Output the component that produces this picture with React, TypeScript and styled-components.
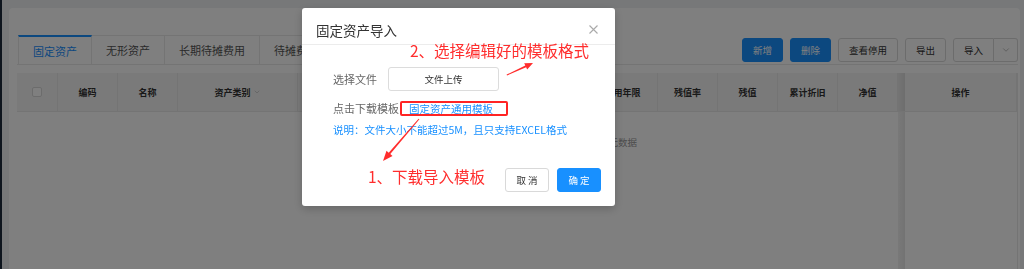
import styled, { createGlobalStyle } from "styled-components";
import { ChevronDown } from "lucide-react";

const GlobalStyle = createGlobalStyle`
  * { box-sizing: border-box; }
  html, body { margin: 0; padding: 0; }
  body {
    width: 1024px;
    height: 269px;
    overflow: hidden;
    font-family: "Noto Sans CJK SC", "Noto Sans", sans-serif;
    background: #eef0f2;
  }
`;

const Page = styled.div`
  display: flex;
  width: 1024px;
  height: 269px;
  background: #eef0f2;
`;
const Sider = styled.div`
  width: 2px;
  background: #1c2a3c;
`;
const Main = styled.div`
  flex: 1;
  display: flex;
  padding: 8px 4px 0 7px;
`;
const Card = styled.div`
  flex: 1;
  display: flex;
  flex-direction: column;
  gap: 8px;
  background: #fff;
  border-radius: 4px 4px 0 0;
  padding: 27px 2px 0 8px;
`;

const TabBar = styled.div`
  display: flex;
  justify-content: space-between;
  align-items: flex-start;
  height: 30px;
  border-bottom: 1px solid #e8e8e8;
`;
const Tabs = styled.div`
  display: flex;
  margin-left: 1px;
`;
const Tab = styled.div<{ $active?: boolean }>`
  height: 29px;
  padding: 0 14px;
  display: flex;
  align-items: center;
  font-size: 11px;
  color: ${(p) => (p.$active ? "#1890ff" : "#555")};
  border: 1px solid #e8e8e8;
  border-left: none;
  border-bottom: none;
  border-top: ${(p) => (p.$active ? "2px solid #1890ff" : "1px solid #e8e8e8")};
  &:first-child {
    border-left: 1px solid #e8e8e8;
  }
`;
const Toolbar = styled.div`
  display: flex;
  gap: 7px;
  padding-top: 3px;
`;
const Btn = styled.div<{ $primary?: boolean }>`
  height: 24px;
  padding: 0 10px;
  display: flex;
  align-items: center;
  justify-content: center;
  font-size: 9.5px;
  border-radius: 3px;
  border: 1px solid ${(p) => (p.$primary ? "#1890ff" : "#d9d9d9")};
  background: ${(p) => (p.$primary ? "#1890ff" : "#fff")};
  color: ${(p) => (p.$primary ? "#fff" : "#333")};
  white-space: pre;
`;
const BtnGroup = styled.div`
  display: flex;
  & > div:first-child {
    border-radius: 3px 0 0 3px;
  }
  & > div:last-child {
    border-radius: 0 3px 3px 0;
    border-left: none;
    padding: 0;
    width: 24px;
    color: #999;
  }
`;

const Table = styled.div`
  flex: 1;
  display: flex;
  flex-direction: column;
  border-right: 1px solid #e8e8e8;
`;
const cols = "41px 60px 60px 120px repeat(5, 58px) 70px repeat(4, 60px) 7px 1fr";
const HeadRow = styled.div`
  display: grid;
  grid-template-columns: ${cols};
  height: 39px;
  background: #f5f5f5;
  border-bottom: 1px solid #e8e8e8;
`;
const HeadCell = styled.div`
  display: flex;
  align-items: center;
  justify-content: center;
  gap: 2px;
  font-size: 9px;
  font-weight: 700;
  color: #333;
  border-right: 1px solid #e8e8e8;
  white-space: nowrap;
`;
const ShadowCell = styled.div`
  background: linear-gradient(to right, rgba(0, 0, 0, 0.05), rgba(0, 0, 0, 0.1));
`;
const CheckBox = styled.span`
  width: 10px;
  height: 10px;
  border: 1px solid #d9d9d9;
  border-radius: 2px;
  background: #fff;
`;
const BodyRow = styled.div`
  flex: 1;
  display: grid;
  grid-template-columns: 881px 7px 1fr;
`;
const ScrollBody = styled.div`
  padding: 15px 0 0 582px;
`;
const EmptyText = styled.span`
  font-size: 9.5px;
  line-height: 14px;
  color: #999;
`;
const FixedBody = styled.div`
  background: #fff;
`;

const Mask = styled.div`
  position: fixed;
  inset: 0;
  background: rgba(0, 0, 0, 0.5);
`;

const Modal = styled.div`
  position: fixed;
  left: 302px;
  top: 8px;
  width: 313px;
  height: 198px;
  display: flex;
  flex-direction: column;
  background: #fff;
  border-radius: 3px;
  box-shadow: 0 3px 10px rgba(0, 0, 0, 0.2);
`;
const ModalHeader = styled.div`
  height: 37px;
  padding: 7px 17px 0 14px;
  display: flex;
  align-items: center;
  justify-content: space-between;
  border-bottom: 1px solid #ececec;
`;
const ModalTitle = styled.div`
  font-size: 13.5px;
  color: #333;
`;
const ModalBody = styled.div`
  display: flex;
  flex-direction: column;
  padding: 22px 0 0 31px;
`;
const FormRow = styled.div<{ $mt?: number }>`
  display: flex;
  align-items: center;
  margin-top: ${(p) => p.$mt ?? 0}px;
`;
const Label = styled.span`
  font-size: 11px;
  color: #666;
  line-height: 15px;
`;
const UploadBtn = styled.div`
  margin-left: 11px;
  width: 111px;
  height: 24px;
  display: flex;
  align-items: center;
  justify-content: center;
  font-size: 9.5px;
  color: #333;
  border: 1px solid #dcdcdc;
  border-radius: 3px;
`;
const LinkBox = styled.span`
  margin-left: 1px;
  padding: 0 13px 0 7px;
  height: 15px;
  display: flex;
  align-items: center;
  border: 2px solid #ff2424;
  border-radius: 2px;
`;
const LinkText = styled.span`
  font-size: 10.5px;
  color: #1890ff;
`;
const Note = styled.div`
  margin-top: 6px;
  font-size: 10.5px;
  line-height: 16px;
  color: #1890ff;
`;
const ModalFooter = styled.div`
  margin-top: auto;
  padding: 0 14px 14px;
  display: flex;
  justify-content: flex-end;
  gap: 8px;
`;
const FooterBtn = styled(Btn)`
  width: 44px;
  padding: 0;
`;

const Callout = styled.div<{ $x: number; $y: number }>`
  position: fixed;
  left: ${(p) => p.$x}px;
  top: ${(p) => p.$y}px;
  font-size: 15.5px;
  line-height: 16px;
  color: #ff2d2d;
  white-space: nowrap;
`;
const ArrowLayer = styled.svg`
  position: fixed;
  inset: 0;
  pointer-events: none;
`;

const tabs = ["固定资产", "无形资产", "长期待摊费用", "待摊费用", "其他资产"];
const headers = [
  "编码",
  "名称",
  "资产类别",
  "规格型号",
  "使用部门",
  "存放地点",
  "开始日期",
  "原值",
  "使用年限",
  "残值率",
  "残值",
  "累计折旧",
  "净值",
];

export default function App() {
  return (
    <>
      <GlobalStyle />
      <Page>
        <Sider />
        <Main>
          <Card>
            <TabBar>
              <Tabs>
                {tabs.map((t, i) => (
                  <Tab key={t} $active={i === 0}>
                    {t}
                  </Tab>
                ))}
              </Tabs>
              <Toolbar>
                <Btn $primary>新增</Btn>
                <Btn $primary>删除</Btn>
                <Btn>查看停用</Btn>
                <Btn>导出</Btn>
                <BtnGroup>
                  <Btn>导入</Btn>
                  <Btn>
                    <ChevronDown size={10} strokeWidth={1.5} />
                  </Btn>
                </BtnGroup>
              </Toolbar>
            </TabBar>
            <Table>
              <HeadRow>
                <HeadCell>
                  <CheckBox />
                </HeadCell>
                {headers.map((h) => (
                  <HeadCell key={h}>
                    {h}
                    {h === "资产类别" && <ChevronDown size={8} color="#bbb" />}
                  </HeadCell>
                ))}
                <ShadowCell />
                <HeadCell>操作</HeadCell>
              </HeadRow>
              <BodyRow>
                <ScrollBody>
                  <EmptyText>暂无数据</EmptyText>
                </ScrollBody>
                <ShadowCell />
                <FixedBody />
              </BodyRow>
            </Table>
          </Card>
        </Main>
      </Page>

      <Mask />

      <Modal>
        <ModalHeader>
          <ModalTitle>固定资产导入</ModalTitle>
          <svg width="9" height="9" viewBox="0 0 9 9">
            <path d="M0.5 0.5 L8.5 8.5 M8.5 0.5 L0.5 8.5" stroke="#aaa" strokeWidth="1.1" />
          </svg>
        </ModalHeader>
        <ModalBody>
          <FormRow>
            <Label>选择文件</Label>
            <UploadBtn>文件上传</UploadBtn>
          </FormRow>
          <FormRow $mt={10}>
            <Label>点击下载模板</Label>
            <LinkBox>
              <LinkText>固定资产通用模板</LinkText>
            </LinkBox>
          </FormRow>
          <Note>说明：文件大小不能超过5M，且只支持EXCEL格式</Note>
        </ModalBody>
        <ModalFooter>
          <FooterBtn>取 消</FooterBtn>
          <FooterBtn $primary>确 定</FooterBtn>
        </ModalFooter>
      </Modal>

      <Callout $x={410} $y={42}>2、选择编辑好的模板格式</Callout>
      <Callout $x={368} $y={168}>1、下载导入模板</Callout>
      <ArrowLayer width="1024" height="269" viewBox="0 0 1024 269">
        <polygon
          points="507,75.4 526.1,67.3 527.2,69.6 533,63 524.2,63.2 525.3,65.5 506.6,74.6"
          fill="#ff2d2d"
        />
        <polygon
          points="419.4,119.3 390.3,154 392.5,156 383,161 386.5,150.8 388.7,152.8 418.6,118.7"
          fill="#ff2d2d"
        />
      </ArrowLayer>
    </>
  );
}
